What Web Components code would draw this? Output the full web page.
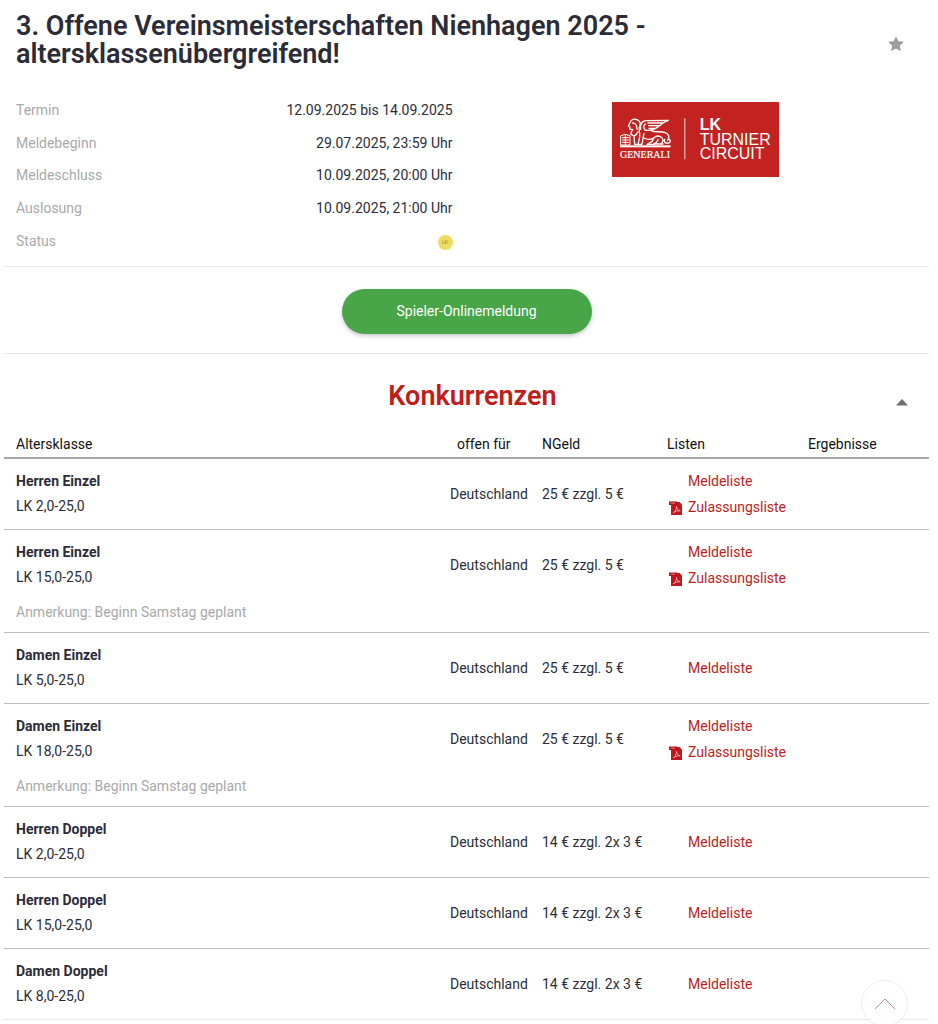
<!DOCTYPE html>
<html lang="de">
<head>
<meta charset="utf-8">
<meta name="viewport" content="width=device-width, initial-scale=1">
<title>3. Offene Vereinsmeisterschaften Nienhagen 2025</title>
<style>
    body {
        margin: 0 9px 0 4px;
        background: #fff;
        color: #2b2c38;
        font-family: Roboto, "Liberation Sans", sans-serif;
        font-size: 14px;
        line-height: 25px;
    }
</style>
</head>
<body>
    <tournament-header>3. Offene Vereinsmeisterschaften Nienhagen 2025 - altersklassenübergreifend!</tournament-header>
    <tournament-info>
        <info-row label="Termin">12.09.2025 bis 14.09.2025</info-row>
        <info-row label="Meldebeginn">29.07.2025, 23:59 Uhr</info-row>
        <info-row label="Meldeschluss">10.09.2025, 20:00 Uhr</info-row>
        <info-row label="Auslosung">10.09.2025, 21:00 Uhr</info-row>
        <info-row label="Status"><lk-badge>LK</lk-badge></info-row>
        <circuit-logo slot="logo"></circuit-logo>
    </tournament-info>
    <signup-bar>Spieler-Onlinemeldung</signup-bar>
    <competition-list>Konkurrenzen</competition-list>
    <scroll-top></scroll-top>

<script>
// attaches an open shadow root filled with the given markup
function render(host, html) {
    const template = document.createElement('template');
    template.innerHTML = html;
    host.attachShadow({ mode: 'open' });
    host.shadowRoot.appendChild(template.content.cloneNode(true));
}

class TournamentHeader extends HTMLElement {
    constructor() {
        super();
        render(this, `
            <style>
                :host {
                    display: flex;
                    align-items: center;
                    justify-content: space-between;
                    gap: 24px;
                    padding: 12px 25px 26px 12px;
                }
                h1 {
                    margin: 0;
                    font-size: 27px;
                    line-height: 28px;
                    font-weight: 600;
                }
                button {
                    flex: none;
                    display: flex;
                    padding: 0;
                    margin-top: 8px;
                    border: 0;
                    background: none;
                    cursor: pointer;
                }
            </style>
            <h1><slot></slot></h1>
            <button type="button" aria-label="Merken">
                <svg width="16" height="16" viewBox="0 0 16 16">
                    <path d="M8 1.2l2 4.5 5 .5-3.700 3.300 1 4.900L8 11.900l-4.300 2.500 1-4.900L1 6.200l5-.5z" fill="#a0a0a0" stroke="#8c8c8c" stroke-width=".8"/>
                </svg>
            </button>
        `);
    }
}

class TournamentInfo extends HTMLElement {
    constructor() {
        super();
        render(this, `
            <style>
                :host {
                    display: grid;
                    grid-template-columns: 1fr 1fr;
                    border-bottom: 1px solid #e8e8e8;
                    padding-bottom: 8px;
                }
                .rows {
                    display: grid;
                    grid-auto-rows: 1fr;
                    min-height: 164px;
                    padding: 0 14px 0 12px;
                }
                .logo {
                    display: flex;
                    justify-content: center;
                    align-items: flex-start;
                    padding: 8px 4px 0 0;
                }
            </style>
            <div class="rows"><slot></slot></div>
            <div class="logo"><slot name="logo"></slot></div>
        `);
    }
}

class InfoRow extends HTMLElement {
    constructor() {
        super();
        render(this, `
            <style>
                :host {
                    display: flex;
                    align-items: center;
                    justify-content: space-between;
                }
                .label { color: #a9a9a9; }
            </style>
            <span class="label"></span>
            <span><slot></slot></span>
        `);
        this.shadowRoot.querySelector('.label').textContent = this.getAttribute('label');
    }
}

class LkBadge extends HTMLElement {
    constructor() {
        super();
        render(this, `
            <style>
                :host {
                    display: flex;
                    align-items: center;
                    justify-content: center;
                    width: 15px;
                    height: 15px;
                    margin-top: 2px;
                    border-radius: 50%;
                    background: #eddc62;
                    color: #8f8430;
                    font-size: 5px;
                    line-height: 5px;
                }
            </style>
            <slot></slot>
        `);
    }
}

class CircuitLogo extends HTMLElement {
    constructor() {
        super();
        render(this, `
            <style>
                :host { display: block; }
                svg { display: block; }
            </style>
            <svg width="167" height="75" viewBox="0 0 501 225" role="img" aria-label="Generali LK Turnier Circuit">
                <rect width="501" height="225" fill="#c22220"/>
                <g fill="none" stroke="#fff" stroke-width="4" stroke-linecap="round" stroke-linejoin="round">
                    <!-- book -->
                    <path d="M27 101l13-4 14 4v28H27zM40 98v30M31 107h18M31 114h18M31 121h18" stroke-width="3"/>
                    <!-- head and mane -->
                    <path d="M76 54c-8-5-19-2-21 6l-6 12 5 3-1 6 9 2M62 63l5 1M76 54c9 3 11 12 7 19s2 12-2 17M70 66c6 5 3 11 6 16M62 83c-4 5-6 9-5 14"/>
                    <!-- front legs -->
                    <path d="M57 97l9 5 2 25M66 102c6-2 9-5 11-12M83 92c2 14-2 23-5 34M96 95c-4 11-3 21-6 31M68 127h22"/>
                    <!-- wing -->
                    <path d="M86 82c-3-13 3-24 14-26l69-1-16 8h-45M153 63l-10 8h-33M143 71l-12 8h-20M131 79c-12 6-23 8-33 5M100 66c-5 3-6 9-3 14"/>
                    <!-- body, haunch and tail -->
                    <path d="M118 86c10 6 25 1 40 5 13 4 16 15 9 24M96 108c10 5 19 5 27 1M121 118c1-13 15-20 26-13 9 6 7 15-1 21M121 118l-16 9h22M138 112c-1 7-6 11-13 14h28M158 112c-4 9 4 14 14 10 6-3 2-11-3-11"/>
                </g>
                <rect x="24" y="130" width="152" height="6" fill="#fff"/>
                <rect x="217" y="49" width="3" height="123" fill="#fff" opacity=".85"/>
                <g fill="#fff">
                    <text x="24" y="169" font-family="Liberation Serif, serif" font-size="30" stroke="#fff" stroke-width=".6">GENERALI</text>
                    <text font-family="Liberation Sans, sans-serif" font-size="48">
                        <tspan x="263" y="85" font-weight="700">LK</tspan>
                        <tspan x="263" y="128">TURNIER</tspan>
                        <tspan x="263" y="171">CIRCUIT</tspan>
                    </text>
                </g>
            </svg>
        `);
    }
}

class SignupBar extends HTMLElement {
    constructor() {
        super();
        render(this, `
            <style>
                :host {
                    display: flex;
                    justify-content: center;
                    padding: 22px 0 19px;
                    border-bottom: 1px solid #e8e8e8;
                }
                button {
                    width: 250px;
                    height: 45px;
                    border: 0;
                    border-radius: 23px;
                    background: #48a548;
                    color: #fff;
                    font: inherit;
                    box-shadow: 0 2px 4px rgba(0, 0, 0, .22);
                    cursor: pointer;
                }
            </style>
            <button type="button"><slot></slot></button>
        `);
    }
}

const competitions = [
    { name: 'Herren Einzel', lk: 'LK 2,0-25,0', fee: '25 € zzgl. 5 €', pdf: true },
    { name: 'Herren Einzel', lk: 'LK 15,0-25,0', fee: '25 € zzgl. 5 €', pdf: true, note: 'Anmerkung: Beginn Samstag geplant' },
    { name: 'Damen Einzel', lk: 'LK 5,0-25,0', fee: '25 € zzgl. 5 €' },
    { name: 'Damen Einzel', lk: 'LK 18,0-25,0', fee: '25 € zzgl. 5 €', pdf: true, note: 'Anmerkung: Beginn Samstag geplant' },
    { name: 'Herren Doppel', lk: 'LK 2,0-25,0', fee: '14 € zzgl. 2x 3 €' },
    { name: 'Herren Doppel', lk: 'LK 15,0-25,0', fee: '14 € zzgl. 2x 3 €' },
    { name: 'Damen Doppel', lk: 'LK 8,0-25,0', fee: '14 € zzgl. 2x 3 €' }
];

const pdfIcon = `
    <svg width="14" height="14" viewBox="0 0 14 14">
        <path d="M2 1h8.500L13 3.500V14H2z" fill="#c4161c"/>
        <path d="M0 .5h8V4H0z" fill="#b01015"/>
        <path d="M1.500 2.200h4.800" stroke="#e9a3a5" stroke-width=".8"/>
        <path d="M4.500 11.500c2-1 3.200-3.500 3-6 .4 2.500 1.700 4 3.700 4.300-2.300-.2-4.500.5-6.700 1.700z" fill="none" stroke="#f3c4c5" stroke-width=".8"/>
    </svg>
`;

class CompetitionList extends HTMLElement {
    constructor() {
        super();
        render(this, `
            <style>
                :host { display: block; }
                header {
                    display: grid;
                    grid-template-columns: 1fr;
                    align-items: center;
                    padding: 26px 0 20px 12px;
                }
                h2, header button { grid-area: 1 / 1; }
                h2 {
                    margin: 0;
                    color: #c01d1b;
                    font-size: 27px;
                    line-height: 32px;
                    font-weight: 600;
                    text-align: center;
                }
                header button {
                    justify-self: end;
                    display: flex;
                    margin: 12px 20px 0 0;
                    padding: 0;
                    border: 0;
                    background: none;
                    cursor: pointer;
                }
                table {
                    width: 100%;
                    table-layout: fixed;
                    border-spacing: 0;
                }
                th, td { box-sizing: border-box; }
                .open { width: 92px; }
                .fee { width: 125px; }
                .lists { width: 141px; }
                .results { width: 133px; }
                th {
                    padding: 0 12px;
                    border-bottom: 2px solid #a8a8a8;
                    color: #111;
                    font-weight: 400;
                    text-align: left;
                }
                th.open { padding: 0 0 0 19px; }
                td { padding: 10px 12px; }
                td.country { padding-right: 0; }
                tr.last td { border-bottom: 1px solid #bcbcbc; }
                tr.last:last-child td { border-bottom-color: #e8e8e8; }
                td b, td span { display: block; }
                td.links { padding: 9px 0 9px 12px; line-height: 26px; }
                td.note { padding: 0 12px 7px; color: #a9a9a9; }
                a {
                    display: grid;
                    grid-template-columns: 21px auto;
                    align-items: center;
                    justify-content: start;
                    color: #c01d1b;
                    text-decoration: none;
                }
                a svg { margin: 2px 0 0 2px; }
                a span { grid-column: 2; grid-row: 1; }
            </style>
            <header>
                <h2><slot></slot></h2>
                <button type="button" aria-label="Einklappen">
                    <svg width="14" height="8" viewBox="0 0 14 8"><path d="M1 7.500L7 1l6 6.500z" fill="#6e6e6e"/></svg>
                </button>
            </header>
            <table>
                <thead>
                    <tr>
                        <th>Altersklasse</th>
                        <th class="open">offen für</th>
                        <th class="fee">NGeld</th>
                        <th class="lists">Listen</th>
                        <th class="results">Ergebnisse</th>
                    </tr>
                </thead>
                <tbody></tbody>
            </table>
        `);
        this.shadowRoot.querySelector('tbody').innerHTML = competitions.map(row => this.rowHtml(row)).join('');
    }

    rowHtml(row) {
        return `
            <tr class="${row.note ? '' : 'last'}">
                <td><b>${row.name}</b><span>${row.lk}</span></td>
                <td class="country">Deutschland</td>
                <td>${row.fee}</td>
                <td class="links">
                    <a href="#"><span>Meldeliste</span></a>
                    ${row.pdf ? `<a href="#">${pdfIcon}<span>Zulassungsliste</span></a>` : ''}
                </td>
                <td></td>
            </tr>
            ${row.note ? `<tr class="last"><td class="note" colspan="5">${row.note}</td></tr>` : ''}
        `;
    }
}

class ScrollTop extends HTMLElement {
    constructor() {
        super();
        render(this, `
            <style>
                /* floats over the page in the lower right corner */
                :host {
                    position: fixed;
                    right: 30px;
                    bottom: -3px;
                }
                button {
                    display: flex;
                    align-items: center;
                    justify-content: center;
                    width: 47px;
                    height: 47px;
                    padding: 0;
                    border: 1px solid #ececec;
                    border-radius: 50%;
                    background: rgba(255, 255, 255, .8);
                    cursor: pointer;
                }
            </style>
            <button type="button" aria-label="Nach oben">
                <svg width="22" height="12" viewBox="0 0 22 12"><path d="M1 11L11 1l10 10" fill="none" stroke="#c08a8a"/></svg>
            </button>
        `);
        this.shadowRoot.querySelector('button').addEventListener('click', () => window.scrollTo(0, 0));
    }
}

window.customElements.define('tournament-header', TournamentHeader);
window.customElements.define('tournament-info', TournamentInfo);
window.customElements.define('info-row', InfoRow);
window.customElements.define('lk-badge', LkBadge);
window.customElements.define('circuit-logo', CircuitLogo);
window.customElements.define('signup-bar', SignupBar);
window.customElements.define('competition-list', CompetitionList);
window.customElements.define('scroll-top', ScrollTop);
</script>
</body>
</html>
